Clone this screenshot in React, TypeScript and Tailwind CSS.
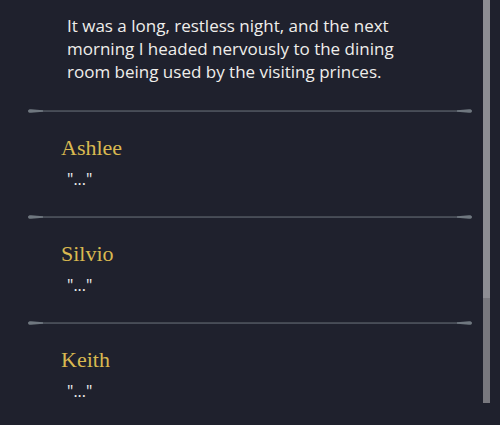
import React from 'react';

const entries = [
  { name: 'Ashlee', line: '"..."' },
  { name: 'Silvio', line: '"..."' },
  { name: 'Keith', line: '"..."' },
];

function Divider() {
  return (
    <svg width="444" height="6" viewBox="0 0 444 6" className="block">
      <rect x="10" y="2.4" width="424" height="1.3" fill="#5b626b" />
      <path d="M0 3 C0 1.5 1.5 1.1 3 1.2 L15 2.3 L15 3.7 L3 4.8 C1.5 4.9 0 4.5 0 3 Z" fill="#6f777f" />
      <path d="M444 3 C444 1.5 442.5 1.1 441 1.2 L429 2.3 L429 3.7 L441 4.8 C442.5 4.9 444 4.5 444 3 Z" fill="#6f777f" />
    </svg>
  );
}

export default function App() {
  return (
    <div className="w-[500px] h-[425px] overflow-hidden bg-[#1f212d] flex">
      {/* Story column */}
      <div className="w-[472px] pl-[28px] pt-[14px]">
        <p
          className="pl-[39px] pr-[50px] text-[17px] leading-[23px] text-[#efeeeb]"
          style={{ fontFamily: '"Open Sans", sans-serif' }}
        >
          It was a long, restless night, and the next morning I headed nervously to the dining room being used by
          the visiting princes.
        </p>

        <div className="mt-[25px]">
          {entries.map((entry) => (
            <div key={entry.name}>
              <Divider />
              <div className="pl-[33px] pt-[20px] h-[100px]">
                <h3
                  className="text-[22px] leading-[28px] text-[#d9b950]"
                  style={{ fontFamily: '"Liberation Serif", serif' }}
                >
                  {entry.name}
                </h3>
                <p
                  className="mt-[6px] pl-[6px] text-[16px] leading-[22px] text-[#f1f1f1]"
                  style={{ fontFamily: '"Open Sans", sans-serif' }}
                >
                  {entry.line}
                </p>
              </div>
            </div>
          ))}
        </div>
      </div>

      {/* Scrollbar */}
      <div className="ml-[11px] w-[7px] h-[403px] flex flex-col">
        <div className="h-[298px] bg-[#8d8d93]" />
        <div className="flex-1 bg-[#78787e]" />
      </div>
    </div>
  );
}
